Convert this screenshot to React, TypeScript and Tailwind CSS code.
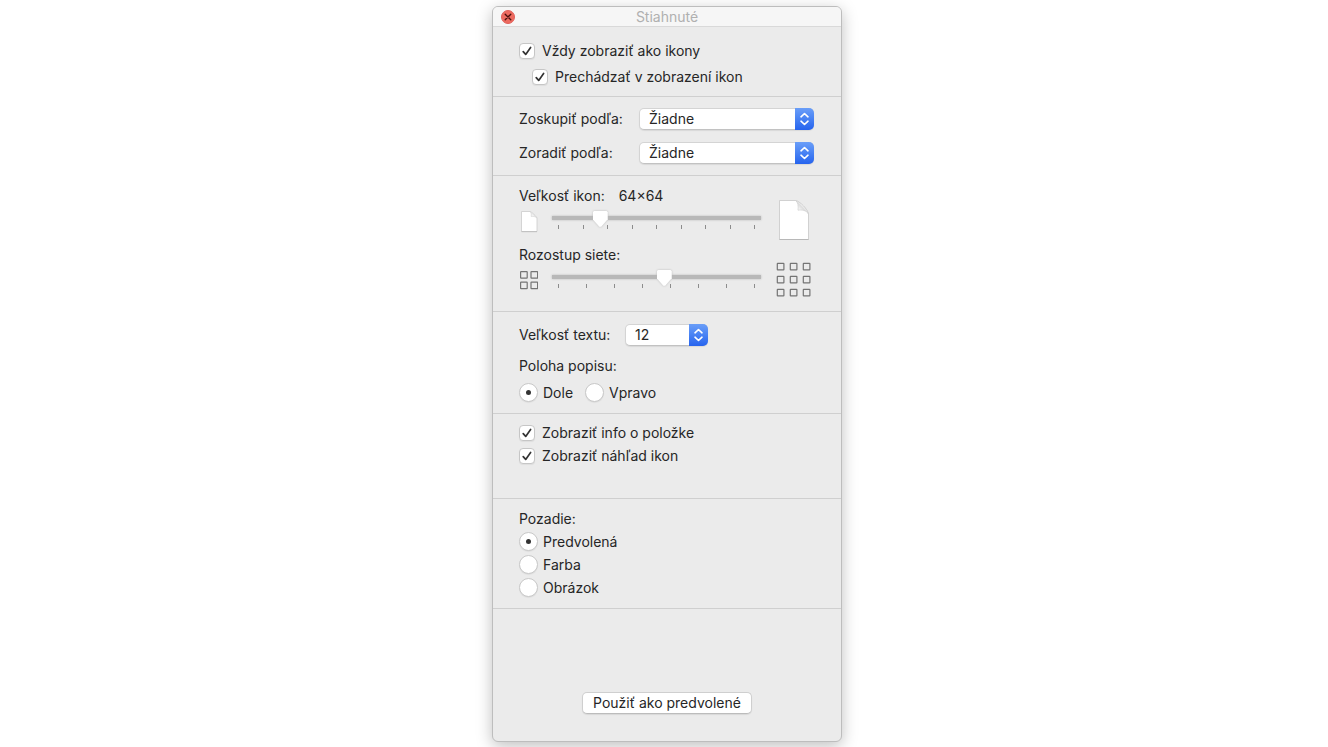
import { useState } from "react";
import type { ReactNode } from "react";

type OptionProps = {
  label: string;
  defaultChecked?: boolean;
};

const Checkbox: React.FC<OptionProps> = ({ label, defaultChecked }) => {
  return (
    <label className="flex h-5 items-center gap-[7px]">
      <span className="relative block h-4 w-4">
        <input
          type="checkbox"
          defaultChecked={defaultChecked}
          className="peer block h-4 w-4 appearance-none rounded-[4px] border border-[#c6c6c6] bg-white shadow-[0_1px_1px_rgba(0,0,0,0.06)]"
        />
        <svg
          viewBox="0 0 16 16"
          className="pointer-events-none absolute inset-0 hidden h-4 w-4 peer-checked:block"
          fill="none"
          stroke="#333333"
          strokeWidth="1.7"
          strokeLinecap="round"
          strokeLinejoin="round"
        >
          <path d="M4.2 8.6 6.7 11.4 11.6 4.5" />
        </svg>
      </span>
      {label}
    </label>
  );
};

const Radio: React.FC<OptionProps & { name: string }> = ({ label, name, defaultChecked }) => {
  return (
    <label className="flex h-5 items-start gap-[5px]">
      <span className="relative block h-[19px] w-[19px]">
        <input
          type="radio"
          name={name}
          defaultChecked={defaultChecked}
          className="peer block h-[19px] w-[19px] appearance-none rounded-full border border-[#c8c8c8] bg-white shadow-[0_1px_1px_rgba(0,0,0,0.06)]"
        />
        <span className="pointer-events-none absolute inset-[7px] hidden rounded-full bg-[#333333] peer-checked:block" />
      </span>
      {label}
    </label>
  );
};

type PopupProps = {
  id: string;
  options: string[];
  defaultValue: string;
};

const Popup: React.FC<PopupProps> = ({ id, options, defaultValue }) => {
  return (
    <div className="relative h-[22px] w-full">
      <select
        id={id}
        defaultValue={defaultValue}
        className="block h-[22px] w-full appearance-none rounded-[5px] border border-[#d4d4d4] border-b-[#c2c2c2] bg-white pl-[9px] pr-6 leading-5 shadow-[0_1px_1px_rgba(0,0,0,0.08)]"
      >
        {options.map((option) => (
          <option key={option}>{option}</option>
        ))}
      </select>
      <span className="pointer-events-none absolute inset-y-0 right-0 flex w-[19px] items-center justify-center rounded-r-[5px] bg-linear-to-b from-[#6a9ef8] to-[#2663ee]">
        <svg
          width="11"
          height="14"
          viewBox="0 0 11 14"
          fill="none"
          stroke="white"
          strokeWidth="1.6"
          strokeLinecap="round"
          strokeLinejoin="round"
        >
          <path d="M2 4.8 5.5 1.5 9 4.8M2 9.2 5.5 12.5 9 9.2" />
        </svg>
      </span>
    </div>
  );
};

type TickSliderProps = {
  label: string;
  ticks: number;
  initial: number;
};

const TickSlider: React.FC<TickSliderProps> = ({ label, ticks, initial }) => {
  const [value, setValue] = useState(initial);

  return (
    <div className="w-[209px]">
      <input
        type="range"
        aria-label={label}
        min={0}
        max={100}
        value={value}
        onChange={(e) => setValue(Number(e.target.value))}
        className="relative z-10 block h-4 w-full appearance-none bg-transparent drop-shadow-[0_0_1px_rgba(0,0,0,0.2)] [&::-webkit-slider-runnable-track]:h-4 [&::-webkit-slider-runnable-track]:bg-[linear-gradient(#b8b8b8,#b8b8b8)] [&::-webkit-slider-runnable-track]:bg-[length:100%_4px] [&::-webkit-slider-runnable-track]:bg-[position:0_5px] [&::-webkit-slider-runnable-track]:bg-no-repeat [&::-webkit-slider-thumb]:h-4 [&::-webkit-slider-thumb]:w-[15px] [&::-webkit-slider-thumb]:appearance-none [&::-webkit-slider-thumb]:bg-white [&::-webkit-slider-thumb]:[clip-path:polygon(0_8%,8%_0,92%_0,100%_8%,100%_52%,56%_98%,44%_98%,0_52%)]"
      />
      <div className="-mt-0.5 flex justify-between px-[6px]">
        {Array.from({ length: ticks }, (_, i) => (
          <span key={i} className="h-1 w-px bg-[#8c8c8c]" />
        ))}
      </div>
    </div>
  );
};

const SmallDocument = () => (
  <svg width="19" height="22" viewBox="0 0 19 22">
    <path d="M2.5.5h8.700c1.300.300 6.600 5.200 6.800 6.500v13.500h-15.500z" fill="white" stroke="#cbcbcb" strokeWidth="0.8" />
    <path d="M11.200.600c1 .8 1.300 3 1 4.900 1.800-.2 4.600 0 5.700 1.400z" fill="#f2f2f2" stroke="#d4d4d4" strokeWidth="0.6" />
    <path d="M2.500 20.700h15.500" stroke="#b8b8b8" strokeWidth="0.8" />
  </svg>
);

const LargeDocument = () => (
  <svg width="35" height="41" viewBox="0 0 35 41">
    <defs>
      <linearGradient id="curl" x1="0" y1="1" x2="1" y2="0">
        <stop offset="0" stopColor="#ffffff" />
        <stop offset="0.3" stopColor="#f8f8f8" />
        <stop offset="0.5" stopColor="#dcdcdc" />
        <stop offset="0.6" stopColor="#f8f8f8" />
      </linearGradient>
    </defs>
    <path d="M3.500 1.500H19.500c4 .5 12.500 9 13 13.500V40.500h-29z" fill="white" stroke="#c8c8c8" strokeWidth="0.8" />
    <path d="M19.500 1.500c2.500 1.500 3 5.500 2.500 9.700 3.500-.6 8.500 0 10.500 3.800C31.500 10.500 24 2.500 19.500 1.500z" fill="url(#curl)" stroke="#d0d0d0" strokeWidth="0.7" />
    <path d="M3.500 40.500h29" stroke="#b8b8b8" strokeWidth="1" />
  </svg>
);

const SmallGrid = () => (
  <svg width="19" height="20" viewBox="0 0 19 20" fill="none" stroke="#747474" strokeWidth="1.2">
    {[1.6, 12.1].map((y) =>
      [1.6, 12].map((x) => <rect key={`${x}-${y}`} x={x} y={y} width="6.6" height="6.6" rx="0.5" />)
    )}
  </svg>
);

const LargeGrid = () => (
  <svg width="35" height="35" viewBox="0 0 35 35" fill="none" stroke="#747474" strokeWidth="1.2">
    {[1.3, 14.3, 27.3].map((y) =>
      [1.3, 14.3, 27.3].map((x) => <rect key={`${x}-${y}`} x={x} y={y} width="6.6" height="6.6" rx="0.5" />)
    )}
  </svg>
);

type SectionProps = {
  className: string;
  children: ReactNode;
};

const Section: React.FC<SectionProps> = ({ className, children }) => {
  return <section className={`border-b border-[#cfcfcf] px-[26px] ${className}`}>{children}</section>;
};

const App: React.FC = () => {
  return (
    <main className="flex min-h-screen items-start justify-center bg-white pt-1.5 pl-1.5 pb-[5px] font-[Inter,'Liberation_Sans',sans-serif] text-sm leading-5 text-[#262626]">
      <div className="w-full max-w-[350px] overflow-hidden rounded-md border border-[#bdbdbd] bg-[#ebebeb] shadow-[0_4px_16px_rgba(0,0,0,0.25)]">
        <header className="flex h-5 items-center border-b border-[#d9d9d9] bg-[#f6f6f6] px-2">
          <button
            type="button"
            aria-label="Zavrieť"
            className="flex h-[14px] w-[14px] items-center justify-center rounded-full border border-[#e0605a] bg-[#ed6a5f]"
          >
            <svg width="8" height="8" viewBox="0 0 8 8" stroke="#4d0f0b" strokeWidth="1.3" strokeLinecap="round">
              <path d="M1.2 1.2 6.8 6.8M6.8 1.2 1.2 6.8" />
            </svg>
          </button>
          <h1 className="flex-1 pr-[14px] text-center text-[#b0b0b0]">Stiahnuté</h1>
        </header>

        <Section className="flex flex-col gap-1.5 pt-[14px] pb-[9px]">
          <Checkbox label="Vždy zobraziť ako ikony" defaultChecked />
          <div className="pl-[13px]">
            <Checkbox label="Prechádzať v zobrazení ikon" defaultChecked />
          </div>
        </Section>

        <Section className="grid grid-cols-[120px_175px] items-center gap-y-3 py-[11px]">
          <label htmlFor="group">Zoskupiť podľa:</label>
          <Popup id="group" options={["Žiadne", "Názov", "Druh"]} defaultValue="Žiadne" />
          <label htmlFor="sort">Zoradiť podľa:</label>
          <Popup id="sort" options={["Žiadne", "Názov", "Druh"]} defaultValue="Žiadne" />
        </Section>

        <Section className="flex flex-col gap-[5px] pt-2.5 pb-[14px]">
          <div className="flex items-end gap-[15px]">
            <div className="h-[54px]">
              <p className="flex gap-[14px]">
                <span>Veľkosť ikon:</span>
                <span>64×64</span>
              </p>
              <div className="flex gap-[14px] pt-[5px]">
                <SmallDocument />
                <TickSlider label="Veľkosť ikon" ticks={9} initial={21} />
              </div>
            </div>
            <LargeDocument />
          </div>
          <div className="flex items-end gap-[15px]">
            <div className="h-[52px]">
              <p>Rozostup siete:</p>
              <div className="flex gap-[14px] pt-[5px]">
                <SmallGrid />
                <TickSlider label="Rozostup siete" ticks={8} initial={54} />
              </div>
            </div>
            <LargeGrid />
          </div>
        </Section>

        <Section className="pt-3 pb-2.5">
          <div className="grid grid-cols-[106px_83px] items-center">
            <label htmlFor="text-size">Veľkosť textu:</label>
            <Popup id="text-size" options={["10", "11", "12", "13", "14", "15", "16"]} defaultValue="12" />
          </div>
          <div role="radiogroup" aria-labelledby="label-position" className="pt-2.5">
            <p id="label-position">Poloha popisu:</p>
            <div className="flex gap-3 pt-[7px]">
              <Radio name="label-position" label="Dole" defaultChecked />
              <Radio name="label-position" label="Vpravo" />
            </div>
          </div>
        </Section>

        <Section className="flex flex-col gap-[3px] pt-[9px] pb-8">
          <Checkbox label="Zobraziť info o položke" defaultChecked />
          <Checkbox label="Zobraziť náhľad ikon" defaultChecked />
        </Section>

        <Section className="py-2.5">
          <div role="radiogroup" aria-labelledby="background" className="flex flex-col gap-[3px]">
            <p id="background">Pozadie:</p>
            <Radio name="background" label="Predvolená" defaultChecked />
            <Radio name="background" label="Farba" />
            <Radio name="background" label="Obrázok" />
          </div>
        </Section>

        <footer className="flex justify-center pt-[83px] pb-[27px]">
          <button
            type="button"
            className="h-[22px] rounded-[5px] border border-[#cfcfcf] border-b-[#bcbcbc] bg-white px-2.5 leading-5 shadow-[0_1px_1px_rgba(0,0,0,0.08)]"
          >
            Použiť ako predvolené
          </button>
        </footer>
      </div>
    </main>
  );
};

export default App;
